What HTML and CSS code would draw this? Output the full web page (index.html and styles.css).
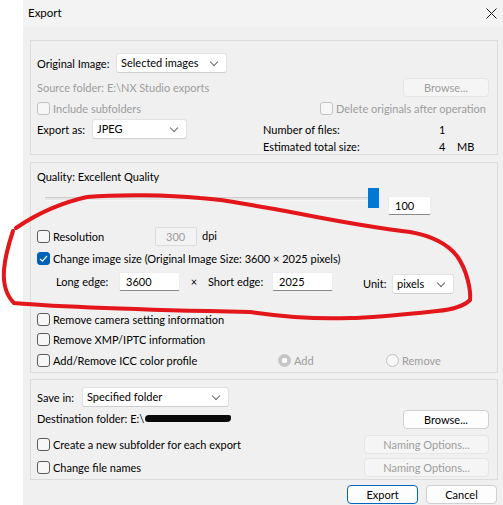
FILE: index.html
```html
<!DOCTYPE html>
<html lang="en">
<head>
    <meta charset="UTF-8">
    <title>Export</title>
    <link rel="stylesheet" href="styles.css">
</head>
<body>
    <div class="dialog">
        <div class="titlebar">
            <span>Export</span>
            <svg class="close" width="11" height="11" viewBox="0 0 11 11"><path d="M0.5 0.5L10.5 10.5M10.5 0.5L0.5 10.5" stroke="#1a1a1a" stroke-width="1"/></svg>
        </div>

        <div class="content">
            <section class="group group-source">
                <div class="row row-original">
                    <span class="label w-original">Original Image:</span>
                    <div class="select w-selected">Selected images<i class="chev"></i></div>
                </div>
                <div class="row row-folder">
                    <span class="muted">Source folder: E:\NX Studio exports</span>
                    <button class="btn btn-disabled w-browse">Browse...</button>
                </div>
                <div class="row row-check">
                    <label class="check-item w-include disabled"><span class="box"></span>Include subfolders</label>
                    <label class="check-item disabled"><span class="box"></span>Delete originals after operation</label>
                </div>
                <div class="row row-format">
                    <div class="format">
                        <span class="label w-exportas">Export as:</span>
                        <div class="select w-jpeg">JPEG<i class="chev"></i></div>
                    </div>
                    <div class="stats">
                        <span>Number of files:</span><span>1</span><span></span>
                        <span>Estimated total size:</span><span>4</span><span>MB</span>
                    </div>
                </div>
            </section>

            <section class="group group-quality">
                <div class="quality-title">Quality: Excellent Quality</div>
                <div class="row row-slider">
                    <div class="slider">
                        <div class="track"></div>
                        <div class="thumb"></div>
                    </div>
                    <div class="input w-quality">100</div>
                </div>
                <div class="row row-res">
                    <label class="check-item w-resolution"><span class="box"></span>Resolution</label>
                    <div class="input input-disabled w-dpi">300</div>
                    <span class="dpi">dpi</span>
                </div>
                <div class="row row-check2">
                    <label class="check-item"><span class="box checked"></span>Change image size (Original Image Size: 3600 × 2025 pixels)</label>
                </div>
                <div class="row row-size">
                    <span class="label w-long">Long edge:</span>
                    <div class="input w-edge">3600</div>
                    <span class="times">×</span>
                    <span class="label w-short">Short edge:</span>
                    <div class="input w-edge">2025</div>
                    <span class="label unit-label">Unit:</span>
                    <div class="select w-unit">pixels<i class="chev"></i></div>
                </div>
                <div class="row row-check3">
                    <label class="check-item"><span class="box"></span>Remove camera setting information</label>
                </div>
                <div class="row row-check4">
                    <label class="check-item"><span class="box"></span>Remove XMP/IPTC information</label>
                </div>
                <div class="row row-check5">
                    <label class="check-item w-icc"><span class="box"></span>Add/Remove ICC color profile</label>
                    <label class="check-item w-add disabled"><span class="radio on"></span>Add</label>
                    <label class="check-item disabled"><span class="radio"></span>Remove</label>
                </div>
            </section>

            <section class="group group-dest">
                <div class="row row-save">
                    <span class="label w-savein">Save in:</span>
                    <div class="select w-folder">Specified folder<i class="chev"></i></div>
                </div>
                <div class="row row-dest">
                    <span class="dest">Destination folder: E:\<span class="scribble"></span></span>
                    <button class="btn w-browse">Browse...</button>
                </div>
                <div class="row row-sub">
                    <label class="check-item"><span class="box"></span>Create a new subfolder for each export</label>
                    <button class="btn btn-disabled w-naming">Naming Options...</button>
                </div>
                <div class="row row-names">
                    <label class="check-item"><span class="box"></span>Change file names</label>
                    <button class="btn btn-disabled w-naming">Naming Options...</button>
                </div>
            </section>

            <div class="actions">
                <button class="btn btn-default w-action">Export</button>
                <button class="btn w-action">Cancel</button>
            </div>
        </div>
    </div>

    <!-- red pen markup drawn over the screenshot -->
    <svg class="markup" width="503" height="505" viewBox="0 0 503 505">
        <path d="M16,228 C35,215 60,203 87,197 C120,194 170,195 200,198 C230,200 248,205 262,207 C300,213 350,225 410,232 C438,237 450,247 457,256 C467,270 471,290 470,300 C462,308 448,310 437,311 C400,315 370,318 350,318 C300,320 265,314 250,312 C150,310 60,307 14,303 C7,296 3,284 4,270 C5,256 9,243 13,231" fill="none" stroke="#e3161c" stroke-width="4" stroke-linecap="round"/>
    </svg>
</body>
</html>
```

FILE: styles.css
```css
*,
*::before,
*::after {
    box-sizing: border-box;
}

:root {
    --clr-dialog: #f0f0f0;
    --clr-title: #f3f3f3;
    --clr-line: #dcdcdc;
    --clr-text: #000000;
    --clr-muted: #9d9d9d;
    --clr-accent: #005fb8;

    --ff-ui: Lato, "Noto Sans", sans-serif;
}

body {
    margin: 0;
    background: #ffffff;
    color: var(--clr-text);
    font-family: var(--ff-ui);
    font-size: 11px;
    line-height: 17px;
    white-space: nowrap;
}

button {
    font: inherit;
    color: inherit;
    padding: 0;
}

.dialog {
    margin-left: 23px;
    width: 480px;
    height: 505px;
    background: var(--clr-dialog);
}

.titlebar {
    height: 26px;
    background: var(--clr-title);
    display: flex;
    align-items: center;
    justify-content: space-between;
    padding: 0 6px 2px 5px;
    font-size: 11.5px;
}

.close {
    margin-top: 2px;
}

.content {
    padding: 14px 5px 0 7px;
}

.group {
    border: 1px solid var(--clr-line);
    padding: 0 8px 0 6px;
}

.group-source {
    height: 115px;
}

.group-quality {
    height: 211px;
    margin-top: 7px;
}

.group-dest {
    height: 101px;
    margin-top: 6px;
}

.row {
    display: flex;
    align-items: center;
}

.label {
    flex: none;
}

/* selects, inputs and buttons */
.select {
    position: relative;
    height: 20px;
    background: #ffffff;
    border: 1px solid #e2e2e2;
    border-bottom-color: #cfcfcf;
    border-radius: 3px;
    padding: 0 0 0 4px;
    line-height: 18px;
    flex: none;
}

.chev {
    position: absolute;
    right: 9px;
    top: 5px;
    width: 6px;
    height: 6px;
    border-right: 1px solid #6a6a6a;
    border-bottom: 1px solid #6a6a6a;
    transform: rotate(45deg);
}

.input {
    height: 19px;
    background: #ffffff;
    border: 1px solid #ececec;
    border-bottom-color: #8a8a8a;
    border-radius: 2px;
    padding: 0 0 0 6px;
    line-height: 17px;
    flex: none;
}

.input-disabled {
    background: #f3f3f3;
    border-color: #dcdcdc;
    color: var(--clr-muted);
    padding-left: 10px;
}

.btn {
    height: 19px;
    background: #fdfdfd;
    border: 1px solid #d0d0d0;
    border-radius: 4px;
    line-height: 17px;
    text-align: center;
    flex: none;
}

.btn-disabled {
    background: #f5f5f5;
    border-color: #e6e6e6;
    color: var(--clr-muted);
}

.btn-default {
    border-color: #0067c0;
}

.muted {
    color: var(--clr-muted);
}

/* checkboxes and radios */
.check-item {
    display: flex;
    align-items: center;
    flex: none;
}

.box {
    width: 13px;
    height: 13px;
    border: 1px solid #5c5c5c;
    border-radius: 3px;
    background: #f7f7f7;
    margin-right: 3px;
    flex: none;
}

.box.checked {
    background: var(--clr-accent) no-repeat center / 9px 9px;
    border-color: var(--clr-accent);
    background-image: url("data:image/svg+xml,%3Csvg xmlns='http://www.w3.org/2000/svg' viewBox='0 0 9 9'%3E%3Cpath d='M1 4.8L3.4 7.2L8 2' fill='none' stroke='white' stroke-width='1.2'/%3E%3C/svg%3E");
}

.disabled {
    color: var(--clr-muted);
}

.disabled .box {
    border-color: #c2c2c2;
}

.radio {
    width: 13px;
    height: 13px;
    border: 1px solid #c2c2c2;
    border-radius: 50%;
    margin-right: 3px;
    flex: none;
    background: #f7f7f7;
}

.radio.on {
    background: radial-gradient(circle, #ffffff 0 2.5px, #c5c5c5 3px);
    border-color: #c5c5c5;
}

/* group 1 */
.row-original {
    margin-top: 12px;
    height: 20px;
}

.w-original { width: 79px; }
.w-selected { width: 111px; }

.row-folder {
    margin-top: 5px;
    height: 19px;
    justify-content: space-between;
}

.w-browse { width: 86px; }

.row-check {
    margin-top: 4px;
    height: 15px;
}

.w-include { width: 283px; }

.row-format {
    margin-top: 3px;
    align-items: flex-start;
}

.format {
    display: flex;
    align-items: center;
    width: 226px;
}

.w-exportas { width: 55px; }
.w-jpeg { width: 95px; }

.stats {
    margin-top: 2px;
    display: grid;
    grid-template-columns: 176px 18px auto;
    line-height: 17px;
}

/* group 2 */
.quality-title {
    margin-top: 5px;
}

.row-slider {
    margin-top: 3px;
    height: 28px;
    align-items: flex-start;
}

.slider {
    position: relative;
    margin-left: 8px;
    width: 334px;
    height: 20px;
}

.track {
    position: absolute;
    left: 0;
    right: 0;
    top: 9px;
    height: 4px;
    background: #e6e6e6;
    border-top: 1px solid #cdcdcd;
    border-bottom: 1px solid #f6f6f6;
}

.thumb {
    position: absolute;
    left: 323px;
    top: 0;
    width: 11px;
    height: 20px;
    background: #0078d4;
}

.w-quality {
    width: 43px;
    margin: 8px 0 0 9px;
}

.row-res {
    margin-top: 11px;
    height: 19px;
}

.w-resolution { width: 118px; }
.w-dpi { width: 42px; }

.dpi {
    margin: -3px 0 0 5px;
}

.row-check2 {
    margin-top: 4px;
    height: 17px;
}

.row-size {
    margin-top: 5px;
    height: 22px;
    padding-left: 19px;
    align-items: flex-start;
}

.row-size .label {
    line-height: 19px;
}

.w-long { width: 63px; }
.w-edge { width: 61px; }

.times {
    width: 28px;
    text-align: center;
    line-height: 19px;
}

.w-short { width: 64px; }

.unit-label {
    margin: 2px 0 0 30px;
    width: 29px;
    line-height: 20px;
}

.w-unit {
    width: 62px;
    margin-top: 2px;
}

.row-check3 {
    margin-top: 17px;
    height: 17px;
}

.row-check4 {
    margin-top: 3px;
    height: 17px;
}

.row-check5 {
    margin-top: 4px;
    height: 17px;
}

.w-icc { width: 241px; }
.w-add { width: 108px; }

/* group 3 */
.row-save {
    margin-top: 7px;
    height: 20px;
}

.w-savein { width: 45px; }
.w-folder { width: 147px; }

.row-dest {
    margin-top: 3px;
    height: 19px;
    justify-content: space-between;
}

.dest {
    display: flex;
    align-items: center;
    margin-top: -2px;
}

.scribble {
    display: inline-block;
    width: 86px;
    height: 7px;
    margin-left: 1px;
    background: #0a0a0a;
    border-radius: 4px 2px 4px 3px;
}

.row-sub {
    margin-top: 6px;
    height: 19px;
    justify-content: space-between;
}

.row-names {
    margin-top: 4px;
    height: 19px;
    justify-content: space-between;
}

.w-naming { width: 125px; }

.actions {
    margin-top: 5px;
    display: flex;
    justify-content: flex-end;
    gap: 8px;
    padding-right: 1px;
}

.w-action { width: 71px; }

.markup {
    position: absolute;
    left: 0;
    top: 0;
    pointer-events: none;
}
```
